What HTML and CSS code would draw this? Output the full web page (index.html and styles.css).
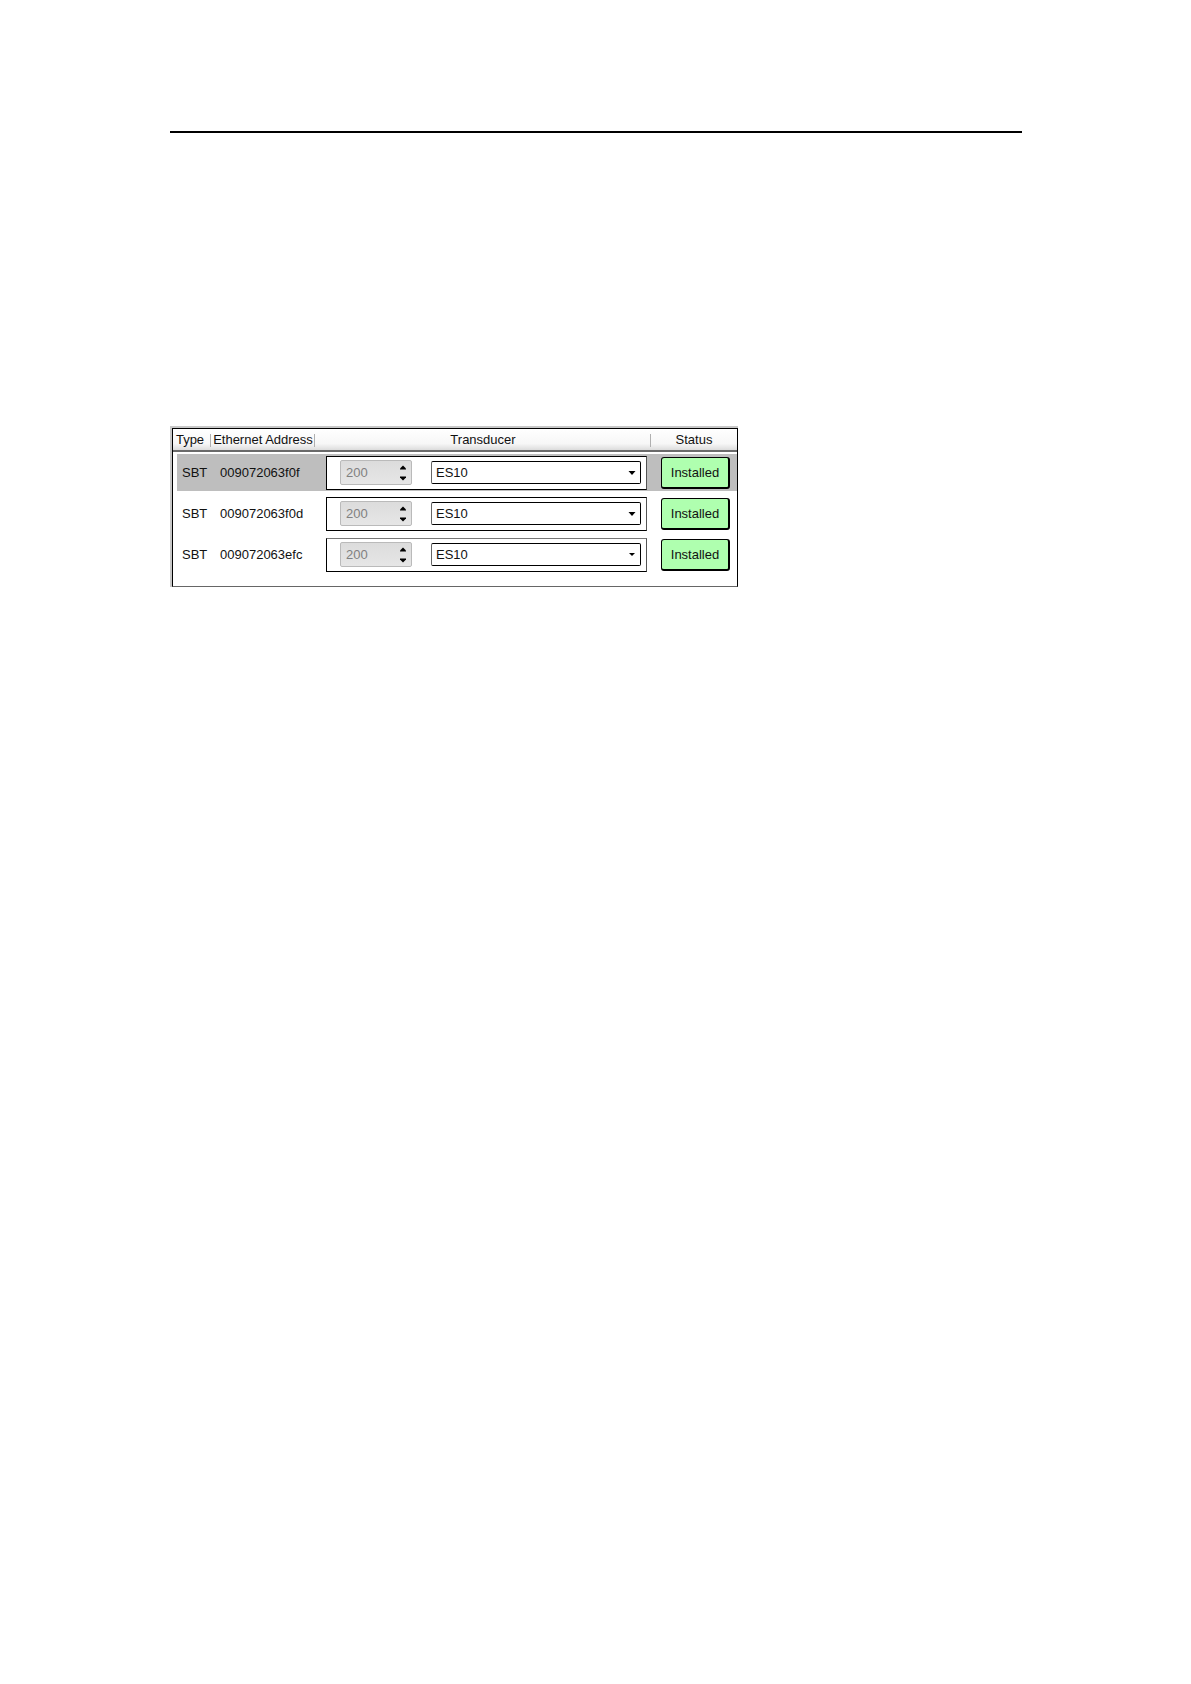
FILE: index.html
```
<!DOCTYPE html>
<html lang="en">
<head>
    <meta charset="UTF-8">
    <meta name="viewport" content="width=device-width, initial-scale=1.0">

    <title>Transducer Installation</title>

    <link rel="stylesheet" href="styles.css">
</head>
<body>

    <main class="page">
        <hr class="page-rule">

        <!-- List of transceivers with their transducers -->
        <div class="panel">
            <table class="transceivers">
                <colgroup>
                    <col class="col-type">
                    <col class="col-address">
                    <col>
                    <col class="col-status">
                </colgroup>
                <thead>
                    <tr>
                        <th scope="col">Type</th>
                        <th scope="col">Ethernet Address</th>
                        <th scope="col">Transducer</th>
                        <th scope="col">Status</th>
                    </tr>
                </thead>
                <tbody>
                    <tr class="selected">
                        <td class="type">SBT</td>
                        <td class="address">009072063f0f</td>
                        <td class="transducer">
                            <div class="frame">
                                <div class="spinner">
                                    <input type="text" value="200" aria-label="Frequency" disabled>
                                    <div class="arrows">
                                        <button type="button" aria-label="Increase" disabled><svg width="8" height="5" viewBox="0 0 8 5"><path d="M1 4.5V3.5L4 0.5L7 3.5V4.5Z"/></svg></button>
                                        <button type="button" aria-label="Decrease" disabled><svg width="8" height="5" viewBox="0 0 8 5"><path d="M1 0.5V1.5L4 4.5L7 1.5V0.5Z"/></svg></button>
                                    </div>
                                </div>
                                <div class="combo">
                                    <select aria-label="Transducer"><option>ES10</option></select>
                                    <svg class="combo-arrow" width="8" height="4" viewBox="0 0 8 4"><path d="M0.5 0H7.5L4 4Z"/></svg>
                                </div>
                            </div>
                        </td>
                        <td class="status"><button type="button" class="installed">Installed</button></td>
                    </tr>
                    <tr>
                        <td class="type">SBT</td>
                        <td class="address">009072063f0d</td>
                        <td class="transducer">
                            <div class="frame">
                                <div class="spinner">
                                    <input type="text" value="200" aria-label="Frequency" disabled>
                                    <div class="arrows">
                                        <button type="button" aria-label="Increase" disabled><svg width="8" height="5" viewBox="0 0 8 5"><path d="M1 4.5V3.5L4 0.5L7 3.5V4.5Z"/></svg></button>
                                        <button type="button" aria-label="Decrease" disabled><svg width="8" height="5" viewBox="0 0 8 5"><path d="M1 0.5V1.5L4 4.5L7 1.5V0.5Z"/></svg></button>
                                    </div>
                                </div>
                                <div class="combo">
                                    <select aria-label="Transducer"><option>ES10</option></select>
                                    <svg class="combo-arrow" width="8" height="4" viewBox="0 0 8 4"><path d="M0.5 0H7.5L4 4Z"/></svg>
                                </div>
                            </div>
                        </td>
                        <td class="status"><button type="button" class="installed">Installed</button></td>
                    </tr>
                    <tr class="last">
                        <td class="type">SBT</td>
                        <td class="address">009072063efc</td>
                        <td class="transducer">
                            <div class="frame">
                                <div class="spinner">
                                    <input type="text" value="200" aria-label="Frequency" disabled>
                                    <div class="arrows">
                                        <button type="button" aria-label="Increase" disabled><svg width="8" height="5" viewBox="0 0 8 5"><path d="M1 4.5V3.5L4 0.5L7 3.5V4.5Z"/></svg></button>
                                        <button type="button" aria-label="Decrease" disabled><svg width="8" height="5" viewBox="0 0 8 5"><path d="M1 0.5V1.5L4 4.5L7 1.5V0.5Z"/></svg></button>
                                    </div>
                                </div>
                                <div class="combo">
                                    <select aria-label="Transducer"><option>ES10</option></select>
                                    <svg class="combo-arrow" width="8" height="4" viewBox="0 0 8 4"><path d="M1 0H7L4 3Z"/></svg>
                                </div>
                            </div>
                        </td>
                        <td class="status"><button type="button" class="installed">Installed</button></td>
                    </tr>
                </tbody>
            </table>
        </div>
    </main>

</body>
</html>
```
FILE: styles.css
```
* {
    box-sizing: border-box;
}

body {
    margin: 0;
    background-color: #fff;
    color: #111;
    font-family: "Liberation Sans", Arial, sans-serif;
    font-size: 13px;
}

input,
select,
button {
    font: inherit;
}

.page {
    padding: 131px 169px 0 170px;
}

.page-rule {
    height: 2px;
    margin: 0 0 293px;
    border: 0;
    background-color: #000;
}

/* Sunken grey edge outside, black line inside */
.panel {
    width: calc(100% * 2 / 3);
    min-width: 500px;
    border-top: 2px solid #c8c8c8;
    border-left: 2px solid #c8c8c8;
}

.transceivers {
    width: 100%;
    table-layout: fixed;
    border-collapse: separate;
    border-spacing: 0;
    border: 1px solid #000;
    border-bottom-color: #666;
    padding-bottom: 11px;
}

.col-type {
    width: 38px;
}

.col-address {
    width: 104px;
}

.col-status {
    width: 86px;
}

/* Header */
th {
    height: 23px;
    padding: 0;
    font-weight: normal;
    white-space: nowrap;
    border-bottom: 2px solid #6a6a6a;
    background:
        linear-gradient(#b0b0b0, #b0b0b0) right 5px / 1px 13px no-repeat,
        linear-gradient(#fff, #f7f7f7 70%, #dcdcdc);
}

th:first-child {
    padding-right: 4px;
}

th:last-child {
    background: linear-gradient(#fff, #f7f7f7 70%, #dcdcdc);
}

/* Rows: white borders keep the selection bar off its neighbours */
td {
    height: 41px;
    padding: 0;
    border-top: 2px solid #fff;
    border-bottom: 2px solid #fff;
}

.selected td {
    background-color: #bebebe;
}

.type {
    padding-left: 5px;
    border-left: 4px solid #fff;
}

.address {
    padding-left: 9px;
}

.transducer {
    padding: 0 4px 0 11px;
}

.frame {
    display: flex;
    align-items: center;
    gap: 19px;
    height: 34px;
    padding: 0 5px 0 13px;
    border: 1px solid #000;
    border-right-color: #555;
    background-color: #fff;
}

.last .frame {
    border-top-color: #777;
}

/* Frequency spinner, greyed out */
.spinner {
    display: flex;
    width: 72px;
    height: 25px;
    border: 1px solid #bababa;
    border-radius: 2px;
    background: linear-gradient(#dcdcdc, #e6e6e6);
}

.spinner input {
    flex: 1;
    min-width: 0;
    padding: 0 0 0 5px;
    border: 0;
    background: none;
    color: #808080;
}

.arrows {
    display: flex;
    flex-direction: column;
    justify-content: center;
    gap: 6px;
    width: 16px;
}

.arrows button {
    display: flex;
    justify-content: center;
    padding: 0;
    border: 0;
    background: none;
}

/* Transducer drop-down */
.combo {
    position: relative;
    flex: 1;
    height: 23px;
}

.combo select {
    display: block;
    width: 100%;
    height: 100%;
    padding: 0 20px 0 4px;
    appearance: none;
    border: 1px solid #000;
    border-left-color: #666;
    border-radius: 2px;
    background-color: #fff;
    color: #111;
}

.combo-arrow {
    position: absolute;
    top: 10px;
    right: 5px;
    pointer-events: none;
}

.status {
    padding: 0 7px 0 10px;
}

.installed {
    display: block;
    width: 100%;
    height: 32px;
    padding: 0;
    border: 1px solid #000;
    border-right-width: 2px;
    border-bottom-width: 2px;
    border-radius: 3px;
    background-color: #afffaf;
    color: #111;
}
```
